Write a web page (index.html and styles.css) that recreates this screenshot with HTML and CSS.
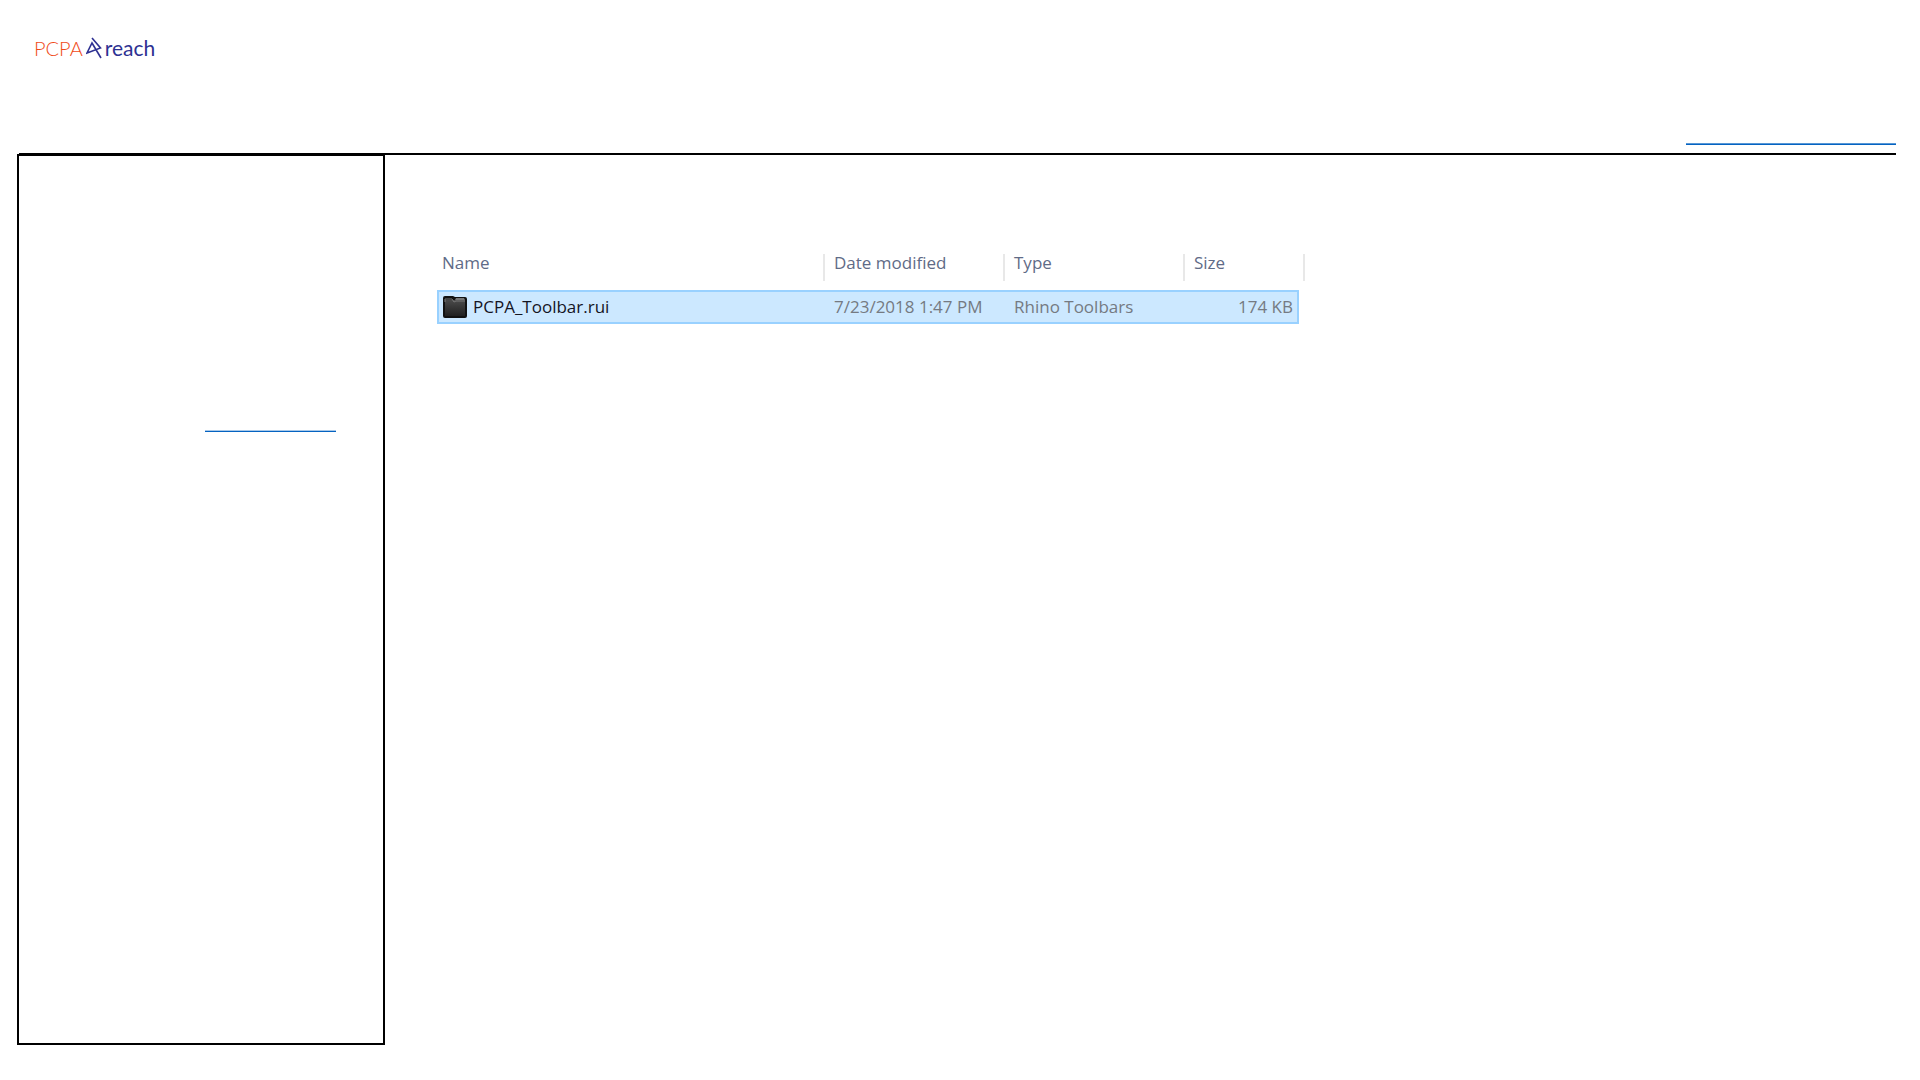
FILE: index.html
```html
<!DOCTYPE html>
<html lang="en">
  <head>
    <meta charset="utf-8">
    <title>PCPA Reach</title>
    <link rel="stylesheet" href="styles.css">
  </head>
  <body>
    <header class="header">
      <a class="logo" href="#">
        <span class="logo-pcpa">PCPA</span>
        <svg class="logo-mark" viewBox="0 0 16 22" aria-hidden="true">
          <path d="M6 1L14.5 11L1 16L6 6L15 21" />
        </svg>
        <span class="logo-reach">reach</span>
      </a>
      <a class="header-link" href="#" aria-label="Contact"></a>
    </header>
    <div class="content">
      <nav class="sidebar">
        <a class="sidebar-link" href="#" aria-label="Download"></a>
      </nav>
      <main class="main">
        <table class="files">
          <colgroup>
            <col class="col-name">
            <col class="col-date">
            <col class="col-type">
            <col class="col-size">
            <col class="col-end">
          </colgroup>
          <thead>
            <tr>
              <th><div>Name</div></th>
              <th><div>Date modified</div></th>
              <th><div>Type</div></th>
              <th colspan="2"><div>Size</div></th>
            </tr>
          </thead>
          <tbody>
            <tr>
              <td class="file-name">
                <div>
                  <svg class="folder" viewBox="0 0 24 22" aria-hidden="true">
                    <defs>
                      <linearGradient id="folder-fill" x1="0" y1="0" x2="0" y2="1">
                        <stop offset="0" stop-color="#4a4a4a" />
                        <stop offset="1" stop-color="#202020" />
                      </linearGradient>
                    </defs>
                    <path d="M2 0H10L12 1H22Q24 1 24 3V20Q24 22 22 22H2Q0 22 0 20V2Q0 0 2 0Z" fill="#111" />
                    <path d="M13 2H21L22 4H12Z" fill="#777" />
                    <path d="M2 4H10L13 4H22V20H2Z" fill="url(#folder-fill)" />
                    <path d="M2 6V3H9L11 6L13 5H22" fill="none" stroke="#777" />
                  </svg>
                  PCPA_Toolbar.rui
                </div>
              </td>
              <td>7/23/2018 1:47 PM</td>
              <td>Rhino Toolbars</td>
              <td class="file-size">174 KB</td>
            </tr>
          </tbody>
        </table>
      </main>
    </div>
  </body>
</html>
```
FILE: styles.css
```css
* {
  box-sizing: border-box;
}

body {
  margin: 0;
  min-height: 100vh;
  display: flex;
  flex-direction: column;
  background: #ffffff;
  font-family: "Open Sans", "Noto Sans", sans-serif;
}

.header {
  display: flex;
  justify-content: space-between;
  margin: 0 24px 0 19px;
  padding: 34px 0 8px 15px;
  min-height: 155px;
  border-bottom: 2px solid #000000;
}

.logo {
  display: flex;
  align-items: center;
  align-self: flex-start;
  gap: 3px;
  font-family: Lato, sans-serif;
  font-size: 20px;
  line-height: 28px;
  text-decoration: none;
}

.logo-pcpa {
  color: #f04a18;
  font-weight: 300;
}

.logo-reach {
  color: #2e3192;
  font-size: 21px;
}

.logo-mark {
  width: 16px;
  height: 22px;
  fill: none;
  stroke: #2e3192;
  stroke-width: 1.6;
}

.header-link {
  align-self: flex-end;
  width: 210px;
  height: 24px;
  border-bottom: 1px solid #0563c1;
  box-shadow: inset 0 -1px #5797d6;
}

.content {
  flex: 1;
  display: flex;
  margin: -1px 24px 35px 17px;
}

.sidebar {
  width: 368px;
  padding: 250px 47px 0 0;
  border: 2px solid #000000;
}

.sidebar-link {
  display: block;
  width: 131px;
  height: 26px;
  margin-left: auto;
  border-bottom: 1px solid #0563c1;
  box-shadow: inset 0 -1px #a9c9e9;
}

.main {
  flex: 1;
  padding: 100px 0 0 52px;
}

.files {
  width: 868px;
  table-layout: fixed;
  border-spacing: 0;
  font-size: 17px;
  line-height: 20px;
}

.col-name {
  width: 388px;
}

.col-date,
.col-type {
  width: 180px;
}

.col-size {
  width: 114px;
}

.col-end {
  width: 6px;
}

.files th {
  padding: 0 0 9px;
  color: #5f6b87;
  font-weight: 400;
  line-height: 18px;
  text-align: left;
}

.files th div {
  height: 27px;
  padding-left: 9px;
  border-right: 2px solid #e8e8e8;
}

.files th:first-child div {
  padding-left: 5px;
}

.files td {
  height: 34px;
  padding: 0 0 0 9px;
  color: #757a82;
  background: #cce8ff;
  border: solid #99d1ff;
  border-width: 2px 0;
}

.files .file-name {
  padding-left: 4px;
  color: #15151f;
  border-left-width: 2px;
}

.file-name div {
  display: flex;
  align-items: center;
  gap: 6px;
}

.files .file-size {
  padding: 0 4px 0 0;
  text-align: right;
  border-right-width: 2px;
}

.folder {
  width: 24px;
  height: 22px;
}
```
